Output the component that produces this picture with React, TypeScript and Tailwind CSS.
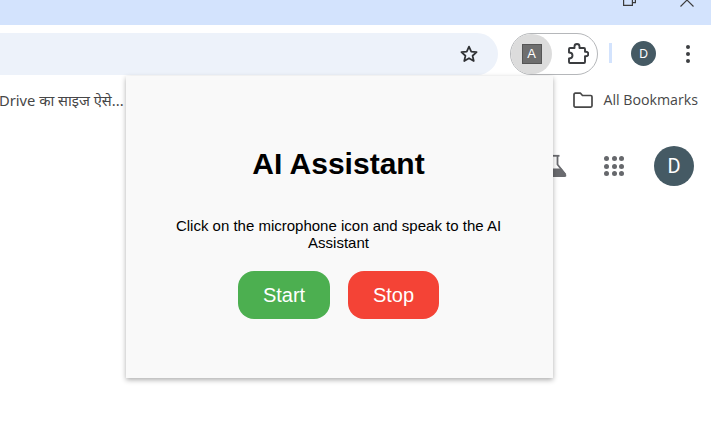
import React from 'react'

const sans = { fontFamily: '"Liberation Sans", Arial, sans-serif' }

const App = () => {
  return (
    <div className="relative w-[711px] h-[426px] overflow-hidden bg-white font-['Liberation_Sans',sans-serif]">
      {/* window title strip */}
      <div className="h-[25px] bg-[#d3e3fd] flex justify-end items-start pr-[17px]">
        <svg width="16" height="8" viewBox="0 0 16 8" className="mr-[42px]" fill="none" stroke="#3c3c3c" strokeWidth="1.2">
          <path d="M1.6 -4V5.4H10.4V-4" />
          <path d="M10.4 2.6H13.4V-4" />
        </svg>
        <svg width="14" height="8" viewBox="0 0 14 8" fill="none" stroke="#3c3c3c" strokeWidth="1.1">
          <path d="M0.5 6.5L7 0L13.5 6.5" />
        </svg>
      </div>

      {/* toolbar */}
      <div className="h-[50px] bg-white rounded-tr-lg pt-2 flex items-start">
        <div className="w-[498px] h-[42px] bg-[#edf2fa] rounded-r-[21px] flex items-center justify-end pr-[19px]">
          <svg width="20" height="20" viewBox="0 0 24 24" fill="none" stroke="#2f3134" strokeWidth="2.1" strokeLinejoin="round">
            <path d="M12 3.2l2.7 5.9 6.4.7-4.8 4.3 1.4 6.3L12 17l-5.7 3.4 1.4-6.3-4.8-4.3 6.4-.7z" />
          </svg>
        </div>
        <div className="ml-3 w-[88px] h-[42px] rounded-[21px] border border-[#b5b7ba] flex items-center">
          <div className="w-[41px] h-[40px] rounded-full bg-[#dcdcdc] flex items-center justify-center">
            <div className="w-5 h-5 bg-[#6e6e6e] border border-[#555] flex items-center justify-center text-[13px] text-white" style={sans}>A</div>
          </div>
          <svg width="22" height="22" viewBox="0 0 22 22" className="ml-[15px]" fill="none" stroke="#3a3c3f" strokeWidth="1.9" strokeLinejoin="round">
            <path d="M3 5H7.500V3.500A2.500 2.500 0 0 1 12.500 3.500V5H17Q18 5 18 6V8.700H19A2.300 2.300 0 0 1 19 13.300H18V19Q18 20 17 20H3Q2 20 2 19V15.500Q5.500 15.500 5.500 12.500T2 9.500V6Q2 5 3 5Z" />
          </svg>
        </div>
        <div className="ml-[11px] mt-[10px] w-[3px] h-[20px] bg-[#d3e3fd]" />
        <div className="ml-[19px] mt-[8px] w-[25px] h-[25px] rounded-full bg-[#455a64] flex items-center justify-center text-[12px] text-white" style={sans}>D</div>
        <div className="ml-[30px] mt-[12px] flex flex-col gap-[3px]">
          <span className="w-1 h-1 rounded-full bg-[#3d3f42]" />
          <span className="w-1 h-1 rounded-full bg-[#3d3f42]" />
          <span className="w-1 h-1 rounded-full bg-[#3d3f42]" />
        </div>
      </div>

      {/* bookmarks bar */}
      <div className="h-[50px] flex items-center justify-between pr-[13px] text-[#474747] font-['Open_Sans',sans-serif]">
        <span className="-ml-px w-[128px] whitespace-nowrap overflow-hidden text-[14.700px] font-['Noto_Sans',sans-serif]">Drive का साइज ऐसे...</span>
        <div className="flex items-center gap-[9px]">
          <svg width="22" height="18" viewBox="0 0 22 18" fill="none" stroke="#474747" strokeWidth="1.7" strokeLinejoin="round">
            <path d="M2 3.500c0-.8.500-1.300 1.300-1.300h5.200l2 2.300h8.200c.8 0 1.300.5 1.300 1.300v9c0 .8-.5 1.300-1.300 1.300H3.300c-.8 0-1.300-.5-1.300-1.300z" />
          </svg>
          <span className="text-[14.200px] leading-none">All Bookmarks</span>
        </div>
      </div>

      {/* page behind the popup */}
      <div className="flex items-center justify-end pt-[21px] pr-[17px]">
        <svg width="27" height="24" viewBox="0 0 27 24" className="mr-[37px]" fill="none" stroke="#6a6b6f" strokeWidth="1.8" strokeLinejoin="round">
          <path d="M8 1.800H19.500" />
          <path d="M17.500 2V10.500L25.500 20.500" />
          <path d="M4 14.500H21.500L26 20.500Q27 23 24.500 23H2Z" fill="#6a6b6f" stroke="none" />
        </svg>
        <div className="grid grid-cols-3 gap-[2.500px] mr-[30px]">
          {[0, 1, 2, 3, 4, 5, 6, 7, 8].map((item) => (
            <span key={item} className="w-[5px] h-[5px] rounded-full bg-[#66686c]" />
          ))}
        </div>
        <div className="w-10 h-10 rounded-full bg-[#455a64] flex items-center justify-center text-[20px] text-white font-['Roboto',sans-serif]">D</div>
      </div>

      {/* extension popup */}
      <div className="absolute left-[126px] top-[76px] w-[427px] h-[302px] bg-[#f9f9f9] shadow-[0_2px_5px_rgba(0,0,0,0.32)] flex flex-col items-center pl-[40px] pr-[42px] pt-[71px] text-center text-black">
        <h1 className="text-[30px] leading-[34px] font-bold">AI Assistant</h1>
        <p className="mt-[36px] w-[347px] text-[15px] leading-[17px]">Click on the microphone icon and speak to the AI Assistant</p>
        <div className="mt-[20px] flex gap-[18px] text-[20px] text-white">
          <button className="w-[92px] h-[48px] rounded-[16px] bg-[#4caf50]">Start</button>
          <button className="w-[91px] h-[48px] rounded-[16px] bg-[#f44336]">Stop</button>
        </div>
      </div>
    </div>
  )
}

export default App
